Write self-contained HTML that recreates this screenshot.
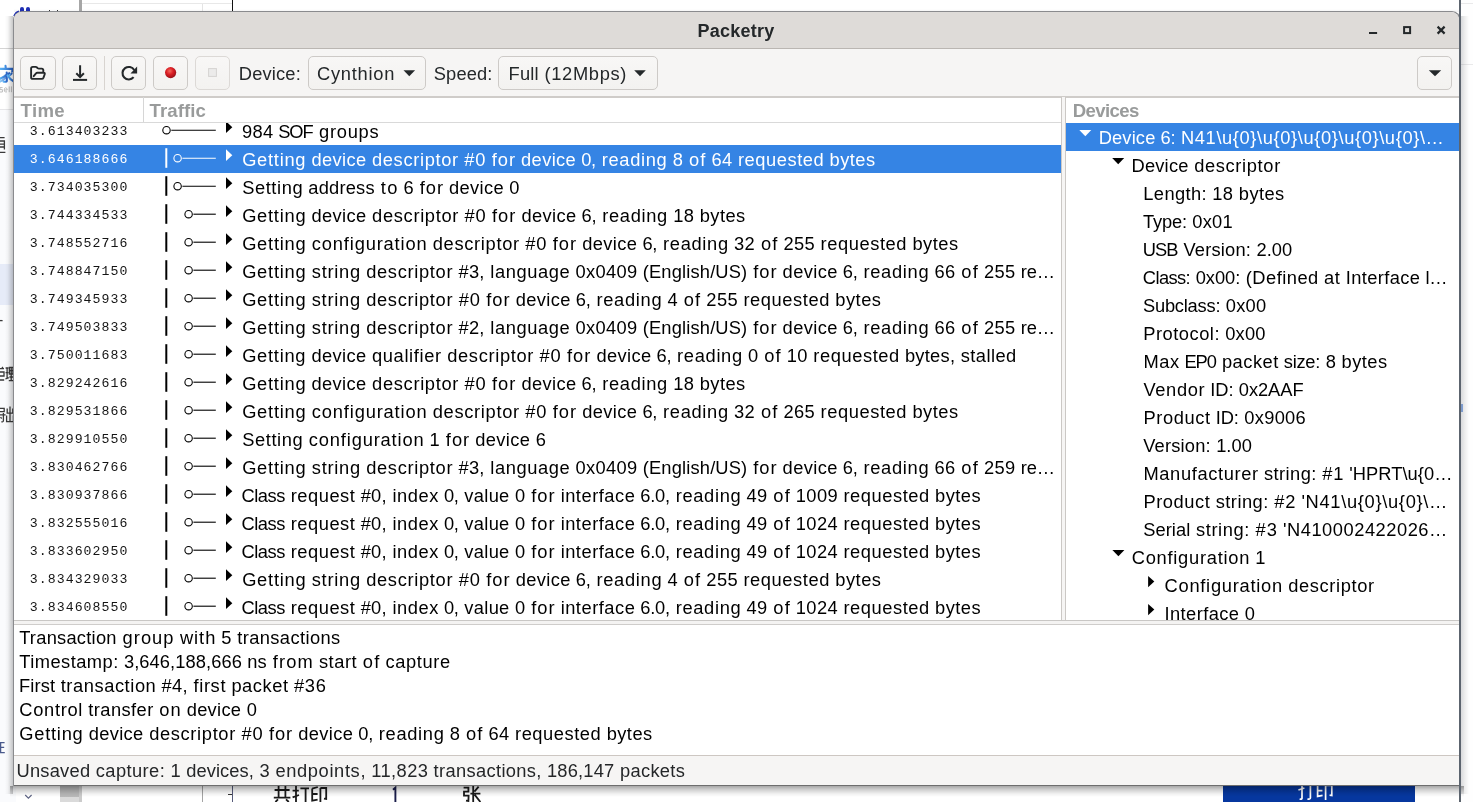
<!DOCTYPE html>
<html><head><meta charset="utf-8"><title>Packetry</title>
<style>
html,body{margin:0;padding:0;}
body{width:1473px;height:802px;overflow:hidden;background:#fff;position:relative;font-family:"Liberation Sans",sans-serif;}
.abs{position:absolute;}
.l{position:absolute;font-size:18.3px;white-space:pre;}
.l i{position:absolute;top:0;font-style:normal;}
.btn{position:absolute;top:56px;height:32px;border:1px solid #cdc7c2;border-radius:5px;background:linear-gradient(#f7f6f5,#f1efed);box-sizing:content-box;}
</style></head><body><div id='root' style='position:absolute;left:0;top:0;width:1473px;height:802px;overflow:hidden;will-change:transform'>

<!-- background -->
<div class='abs' style='left:0;top:109.5px;width:16px;height:693px;background:#fafbfd'></div>
<div class='abs' style='left:0;top:263.5px;width:16px;height:41.5px;background:#e6ebf8'></div>
<div class='abs' style='left:0;top:47.5px;width:16px;height:1px;background:#d4d4d4'></div>
<div class='abs' style='left:0;top:109px;width:16px;height:1px;background:#e6e6e8'></div>
<div class='abs' style='left:79.3px;top:0;width:2.7px;height:14px;background:#a6a6a6'></div>
<div class='abs' style='left:82px;top:3.2px;width:150px;height:1px;background:#e8e8e8'></div>
<div class='abs' style='left:201.5px;top:4px;width:1px;height:10px;background:#e4e4e4'></div>
<div class='abs' style='left:231.6px;top:0;width:1.4px;height:14px;background:#111'></div>
<div class='abs' style='left:65px;top:10.6px;width:14.5px;height:1.6px;background:#1c1c1c'></div>
<div class='abs' style='left:48.5px;top:9.5px;width:1.2px;height:3px;background:#333'></div>
<div class='abs' style='left:57px;top:9.5px;width:1.2px;height:3px;background:#333'></div>
<div class='abs' style='left:19.8px;top:7px;width:4.6px;height:7px;border-radius:2.3px 2.3px 0 0;background:#1f2fb4'></div>
<div class='abs' style='left:25.6px;top:7px;width:4.6px;height:7px;border-radius:2.3px 2.3px 0 0;background:#1f2fb4'></div>
<svg class='abs' style='left:12px;top:9px' width='10' height='10' viewBox='0 0 10 10'><path d='M2 7 Q3.5 3.2 7 2.2' stroke='#1f2fb4' stroke-width='1.6' fill='none'/></svg>
<svg class='abs' style='left:0;top:60px' width='16' height='40' viewBox='0 60 16 40'>
<defs><linearGradient id='jg' x1='0' x2='1' y1='0' y2='0'><stop offset='0' stop-color='#5ab4f6'/><stop offset='1' stop-color='#2a62c4'/></linearGradient></defs>
<g stroke='url(#jg)' stroke-width='2.1' fill='none' stroke-linecap='round'>
<path d='M5.4 65.8 L5.6 68'/><path d='M0 68.9 L12.6 68.9 L12.2 71.4'/><path d='M0 72.5 L9.6 72.5'/>
<path d='M9.2 73.2 Q5 77 0 78.6'/><path d='M6.7 72.6 L6.8 81 Q6.6 82.2 3.6 81.6'/><path d='M5.8 75 Q3 77.6 0 78.8' opacity='.7'/>
<path d='M5.8 77.6 Q3 80.4 0 81.6' opacity='.7'/><path d='M7.6 75.4 Q10 79.4 13.2 81.2'/><path d='M11.6 73.4 L9.6 75.4'/>
</g>
<g stroke='#bdbdbd' stroke-width='1' fill='none'>
<path d='M2.6 87.6 L0 87.6 L0 89.6 L2.4 89.6 L2.4 92 L0 92'/><path d='M4.2 90 L7.2 90 Q7.2 87.8 5.6 87.8 Q4.2 87.8 4.2 90 Q4.2 92 5.8 92 L7 91.8'/><path d='M9.2 86.4 L9.2 92.2'/><path d='M11.4 86.4 L11.4 92.2'/>
</g></svg>
<svg class='abs' style='left:0;top:130px' width='16' height='300' viewBox='0 130 16 300'>
<g stroke='#3a3a3a' stroke-width='1.3' fill='none'>
<path d='M0 137.6 L4.6 137.6 M0 141 L4.4 141 L4.4 149.4 M0 144.2 L4.4 144.2 M0 147 L4.4 147 M0 152.4 L5.4 152.4'/>
<path d='M0 320.6 L2.6 320.6'/>
<path d='M0 368.6 L4 368.6 M0 372 L4 372 L4 376 L0 376 M0 380 L4.2 380 M2 367 L3 368.4'/>
<path d='M5.6 368 L8.6 368 M5.6 372.6 L8.6 372.6 M5.4 379 L8.8 377.6 M7.1 368 L7.1 378.4'/>
<path d='M9.4 367.4 L13 367.4 L13 374 L9.4 374 Z M9.4 370.7 L13 370.7 M11.2 367.4 L11.2 380.4 M9.4 377 L13 377 M8.8 380.6 L13.4 380.6'/>
<path d='M0 408.4 L4.2 408.4 L4.2 411.6 L0 411.6 M0 414.8 L5.6 414.8 M3.4 413 L3.4 421 Q3.2 422.2 1.4 421.6 M0.6 417 L1.6 418.6'/>
<path d='M10 406.4 L10 421.6 M7.2 408.4 L7.2 413.2 L12.8 413.2 L12.8 408.4 M6.6 415.4 L6.6 421.6 L13.4 421.6 L13.4 415.4'/>
</g>
<g stroke='#4a5a8c' stroke-width='1.3' fill='none'><path d='M4.6 742.6 L0.6 742.6 L0.6 752.6 L4.8 752.6 M0.6 747.4 L4.2 747.4'/></g>
</svg>
<svg class='abs' style='left:0;top:736px' width='16' height='24' viewBox='0 736 16 24'><g stroke='#4a5a8c' stroke-width='1.3' fill='none'><path d='M4.6 742.6 L0.6 742.6 L0.6 752.6 L4.8 752.6 M0.6 747.4 L4.2 747.4'/></g></svg>
<div class='abs' style='left:1461px;top:0;width:12px;height:802px;background:#fefefe'></div>
<div class='abs' style='left:1461px;top:3px;width:12px;height:1px;background:#e9e9ea'></div>
<div class='abs' style='left:1461px;top:63.5px;width:12px;height:1px;background:#e9e9ea'></div>
<div class='abs' style='left:1461.4px;top:404px;width:1.6px;height:8px;background:#8fb0e6'></div>
<div class='abs' style='left:60.3px;top:780px;width:18.7px;height:16.7px;background:#b9b9b9'></div>
<div class='abs' style='left:60.3px;top:796.7px;width:18.7px;height:6px;background:#dadada'></div>
<div class='abs' style='left:79px;top:780px;width:2.8px;height:22px;background:#cbcbcb'></div>
<div class='abs' style='left:201.8px;top:780px;width:1.2px;height:22px;background:#a4a4a4'></div>
<div class='abs' style='left:232px;top:780px;width:1.2px;height:22px;background:#565b7a'></div>
<div class='abs' style='left:228px;top:794px;width:4px;height:1.4px;background:#333'></div>
<svg class='abs' style='left:24px;top:793px' width='10' height='8' viewBox='0 0 10 8'><path d='M1.2 2 L4.4 5.2 L7.6 2' stroke='#5a6080' stroke-width='1.1' fill='none'/></svg>
<svg class='abs' style='left:268px;top:780px' width='220' height='22' viewBox='268 780 220 22'>
<g stroke='#1a1a1a' stroke-width='1.8' fill='none'>
<path d='M278.6 786 L278.6 797.6 M285.4 786 L285.4 797.6 M274.6 790 L289.6 790 M273.8 797.6 L290.4 797.6 M278 799.4 L275.4 802 M286 799.4 L288.8 802'/>
<path d='M292.6 790.6 L298.8 790.6 M296 786 L296 802 M292.6 797.4 L299 795 M300.4 788.4 L309 788.4 M305.6 788.4 L305.6 802'/>
<path d='M312.2 788.6 L312.2 800.6 L317.6 799.6 M312.2 788.6 L317.8 787 M312.2 794 L317.6 794 M320.4 788 L326.2 788 L326.2 799 L324 798.6 M320.4 788 L320.4 802'/>
<path d='M463.6 787.6 L468.4 787.6 L468.4 791.6 L464 791.6 L464 795.6 L468.6 795.6 L468.4 801 L466 800.6'/>
<path d='M473.2 786 L473.2 802 M470.4 793.6 L480.4 793.6 M478.6 786.6 L474.4 791.6 M474.6 794.6 L480.4 802'/>
</g>
<path d='M393 789.8 L395.4 787.6 L395.4 802' stroke='#1a1d4a' stroke-width='1.9' fill='none'/>
</svg>
<div class='abs' style='left:1222.6px;top:780px;width:192px;height:22px;background:#06379f'></div>
<svg class='abs' style='left:1290px;top:780px' width='60' height='22' viewBox='1290 780 60 22'>
<g stroke='#fff' stroke-width='1.7' fill='none'>
<path d='M1298.4 790 L1304.4 788 M1302 785 L1302 798.4 Q1301.8 799.6 1299.6 799 M1305.6 785 L1312.6 785 M1310.4 785 L1310.4 798 Q1310.2 799.6 1307.4 799'/>
<path d='M1317.6 785 L1317.6 796.4 L1322.6 795.4 M1317.6 790.6 L1322.4 790.6 M1325.6 785 L1325.6 800 M1325.6 785.4 L1331.8 785.4 L1331.8 795.6 L1329.6 795.2'/>
</g></svg>
<!-- window -->
<div class='abs' style='left:4.5px;top:16px;width:8.4px;height:778px;background:linear-gradient(to right,rgba(0,0,0,0) 0%,rgba(0,0,0,0.035) 35%,rgba(0,0,0,0.215) 100%)'></div>
<div class='abs' style='left:1461px;top:16px;width:7.5px;height:778px;background:linear-gradient(to right,rgba(20,25,40,0.16) 0%,rgba(0,0,0,0.07) 45%,rgba(0,0,0,0) 100%)'></div>
<div class='abs' style='left:10px;top:785.8px;width:1454px;height:11.4px;background:linear-gradient(to bottom,rgba(0,0,0,0.34) 0%,rgba(0,0,0,0.2) 30%,rgba(0,0,0,0.06) 70%,rgba(0,0,0,0) 100%)'></div>
<div class='abs' style='left:14px;top:9px;width:1445px;height:3px;background:linear-gradient(to bottom,rgba(0,0,0,0),rgba(0,0,0,0.05))'></div>
<div class='abs' style='left:12.9px;top:11.2px;width:1448.2px;height:774.7px;border-radius:9px 9px 0 0;background:#8a8b8e'></div>
<div class='abs' style='left:1458.9px;top:0;width:2.2px;height:802px;background:#5c646e'></div>
<div class='abs' style='left:14px;top:784.6px;width:1445px;height:1.3px;background:#6e6e6e'></div>
<div class='abs' id='win' style='left:14.1px;top:12px;width:1444.8px;height:772.7px;border-radius:8px 8px 0 0;overflow:hidden;background:#fff'>
<div class='abs' style='left:0;top:0;width:1446px;height:36.3px;background:#dedbd8'></div>
<div class='abs' style='left:0;top:36px;width:1446px;height:1.4px;background:#bab6b2'></div>
<div class='abs' style='left:0;top:37.3px;width:1446px;height:47.2px;background:#f6f5f4'></div>
<div class='abs' style='left:0;top:84.2px;width:1446px;height:1.4px;background:#cfccc9'></div>
</div>
<div style='position:absolute;left:697.6px;top:12.7px;height:37px;line-height:37px;font-family:"Liberation Sans", sans-serif;font-size:18px;font-weight:bold;letter-spacing:0.220px;color:#24282a;white-space:pre;'>Packetry</div>
<svg class='abs' style='left:1360px;top:20px' width='95' height='22' viewBox='0 0 95 22'>
<rect x='9' y='12' width='8.1' height='2' fill='#24282a'/>
<rect x='44.1' y='7.1' width='6' height='6' fill='none' stroke='#24282a' stroke-width='2'/>
<path d='M77.6 6.6 L84.6 13.6 M84.6 6.6 L77.6 13.6' stroke='#24282a' stroke-width='2.2' fill='none'/>
</svg>
<div class='abs' style='left:20.4px;top:56.4px;width:33.3px;height:31.2px;border:1px solid #cdcac7;border-radius:5px;background:linear-gradient(#f8f7f6,#f3f2f0)'></div>
<div class='abs' style='left:62.2px;top:56.4px;width:33.3px;height:31.2px;border:1px solid #cdcac7;border-radius:5px;background:linear-gradient(#f8f7f6,#f3f2f0)'></div>
<div class='abs' style='left:111.4px;top:56.4px;width:33.1px;height:31.2px;border:1px solid #cdcac7;border-radius:5px;background:linear-gradient(#f8f7f6,#f3f2f0)'></div>
<div class='abs' style='left:153.2px;top:56.4px;width:33.3px;height:31.2px;border:1px solid #cdcac7;border-radius:5px;background:linear-gradient(#f8f7f6,#f3f2f0)'></div>
<div class='abs' style='left:195.3px;top:56.4px;width:33.2px;height:31.2px;border:1px solid #dcd9d6;border-radius:5px;background:linear-gradient(#f8f7f6,#f3f2f0)'></div>
<div class='abs' style='left:103.9px;top:56.4px;width:1.0px;height:33.2px;background:#d8d4d0;'></div>
<svg class='abs' style='left:20px;top:56px' width='215' height='34' viewBox='20 56 215 34'>
<g fill='none' stroke='#24282a' stroke-width='1.9' stroke-linejoin='round' stroke-linecap='round'>
<path d='M33.7 76.2 L36 73.4 Q36.5 72.7 37.4 72.7 L43.6 72.7 Q45.2 72.7 44.7 74.2 L43.5 77.6 Q43 78.9 41.6 78.9 L32.8 78.9 Q31.1 78.9 31.1 77.2 L31.1 68.6 Q31.1 66.9 32.8 66.9 L35.6 66.9 Q36.4 66.9 37 67.5 L37.6 68.1 Q38.1 68.6 39 68.6 L41.7 68.6 Q43.3 68.6 43.3 70.2 L43.3 71.6'/>
</g>
<g fill='none' stroke='#24282a' stroke-width='2'>
<path d='M80.1 65.2 L80.1 76.6 M76.3 73.3 L80.1 77.1 L83.9 73.3' stroke-linecap='butt'/>
<path d='M73 79.9 L87.1 79.9'/>
</g>
<path d='M133.6 77.2 A6.25 6.25 0 1 1 134.2 70.1' fill='none' stroke='#24282a' stroke-width='2.1'/>
<path d='M137.1 66.6 L137.1 73.4 L130.5 73.4 Z' fill='#24282a'/>
<defs><radialGradient id='rg' cx='42%' cy='36%' r='62%'><stop offset='0' stop-color='#f06a5c'/><stop offset='0.5' stop-color='#dc1f25'/><stop offset='1' stop-color='#9c1219'/></radialGradient></defs>
<circle cx='170.6' cy='72.6' r='5.6' fill='url(#rg)'/>
<rect x='208.6' y='68.6' width='7.8' height='7.8' fill='#ecebea' stroke='#d5d3d1' stroke-width='1'/>
</svg>
<div class='l' style='left:238.70px;top:57px;height:34px;line-height:34px;color:#24282a'><i style='left:0.08px;letter-spacing:0.169px'>Device:</i></div>
<div class='abs' style='left:307.7px;top:56.4px;width:116.8px;height:31.2px;border:1px solid #cdcac7;border-radius:5px;background:linear-gradient(#f8f7f6,#f3f2f0)'></div>
<div class='l' style='left:316.57px;top:57px;height:34px;line-height:34px;color:#24282a'><i style='left:0.38px;letter-spacing:0.769px'>Cynthion</i></div>
<svg class='abs' style='left:403px;top:70px' width='15' height='9' viewBox='0 0 15 9'><path d='M0.50 0.20 L12.10 0.20 L6.30 6.20 Z' fill='#24282a'/></svg>
<div class='l' style='left:433.77px;top:57px;height:34px;line-height:34px;color:#24282a'><i style='left:0.06px;letter-spacing:0.115px'>Speed:</i></div>
<div class='abs' style='left:498.4px;top:56.4px;width:157.6px;height:31.2px;border:1px solid #cdcac7;border-radius:5px;background:linear-gradient(#f8f7f6,#f3f2f0)'></div>
<div class='l' style='left:508.40px;top:57px;height:34px;line-height:34px;color:#24282a'><i style='left:0.11px;letter-spacing:0.227px'>Full</i><i style='left:36.12px;letter-spacing:0.666px'>(12Mbps)</i></div>
<svg class='abs' style='left:634px;top:70px' width='15' height='9' viewBox='0 0 15 9'><path d='M0.20 0.20 L11.80 0.20 L6.00 6.20 Z' fill='#24282a'/></svg>
<div class='abs' style='left:1417.3px;top:56.4px;width:33.2px;height:31.2px;border:1px solid #cdcac7;border-radius:5px;background:linear-gradient(#f8f7f6,#f3f2f0)'></div>
<svg class='abs' style='left:1428px;top:70px' width='15' height='9' viewBox='0 0 15 9'><path d='M0.80 0.20 L13.20 0.20 L7.00 6.20 Z' fill='#24282a'/></svg>
<!-- traffic -->
<div style='position:absolute;left:20.6px;top:98.2px;height:25px;line-height:25px;font-family:"Liberation Sans", sans-serif;font-size:18.6px;font-weight:bold;letter-spacing:0.312px;color:#999b9b;white-space:pre;'>Time</div>
<div style='position:absolute;left:149.6px;top:98.2px;height:25px;line-height:25px;font-family:"Liberation Sans", sans-serif;font-size:18.6px;font-weight:bold;letter-spacing:0.065px;color:#999b9b;white-space:pre;'>Traffic</div>
<div class='abs' style='left:143.0px;top:97.4px;width:1.0px;height:24.6px;background:#d6d6d6;'></div>
<div class='abs' style='left:14.0px;top:122.0px;width:1048.0px;height:1.0px;background:#d9d9d9;'></div>
<div class='abs' style='left:1061.0px;top:97.0px;width:1.0px;height:523.5px;background:#cbc8c5;'></div>
<div class='abs' style='left:1065.0px;top:97.0px;width:1.0px;height:523.5px;background:#cbc8c5;'></div>
<div class='abs' style='left:1062.0px;top:97.0px;width:3.0px;height:523.5px;background:#f6f5f4;'></div>
<div class='abs' style='left:14px;top:123px;width:1047px;height:497px;overflow:hidden'>
<div class='abs' style='left:0;top:-6px;width:1048px;height:28px;'>
<div class='abs' style='left:15.8px;top:0.9px;height:28px;line-height:28px;font-family:"Liberation Mono", monospace;font-size:13.2px;letter-spacing:1.054px;color:#151515;white-space:pre'>3.613403233</div>
<svg class='abs' style='left:136px;top:0' width='90' height='28' viewBox='150 0 90 28'><circle cx='166.5' cy='13.2' r='3.7' fill='none' stroke='#000' stroke-width='1.1'/><line x1='171.3' y1='13.2' x2='215.8' y2='13.2' stroke='#000' stroke-width='1.1'/><path d='M226 4.3 L232.3 10.2 L226 16.1 Z' fill='#000'/></svg>
<div class='l' style='left:227.84px;top:0.5px;height:28px;line-height:28px;color:#000'><i style='left:0.17px;letter-spacing:0.340px'>984</i><i style='left:36.37px;letter-spacing:-1.010px'>SOF</i><i style='left:77.16px;letter-spacing:0.753px'>groups</i></div>
</div>
<div class='abs' style='left:0;top:22px;width:1048px;height:28px;background:#3584e4;'>
<div class='abs' style='left:15.8px;top:0.9px;height:28px;line-height:28px;font-family:"Liberation Mono", monospace;font-size:13.2px;letter-spacing:1.054px;color:#fff;white-space:pre'>3.646188666</div>
<svg class='abs' style='left:136px;top:0' width='90' height='28' viewBox='150 0 90 28'><line x1='166.3' y1='3.2' x2='166.3' y2='22.8' stroke='#fff' stroke-width='2'/><circle cx='177.6' cy='13.2' r='3.7' fill='none' stroke='#fff' stroke-width='1.1'/><line x1='182.4' y1='13.2' x2='215.8' y2='13.2' stroke='#fff' stroke-width='1.1'/><path d='M226 4.3 L232.3 10.2 L226 16.1 Z' fill='#fff'/></svg>
<div class='l' style='left:227.78px;top:0.5px;height:28px;line-height:28px;color:#fff'><i style='left:0.37px;letter-spacing:0.739px'>Getting</i><i style='left:69.66px;letter-spacing:0.361px'>device</i><i style='left:130.18px;letter-spacing:0.657px'>descriptor</i><i style='left:222.49px;letter-spacing:0.864px'>#0</i><i style='left:249.97px;letter-spacing:0.996px'>for</i><i style='left:279.34px;letter-spacing:0.361px'>device</i><i style='left:339.41px;letter-spacing:-0.243px'>0,</i><i style='left:359.99px;letter-spacing:0.671px'>reading</i><i style='left:430.88px;letter-spacing:0.358px'>8</i><i style='left:447.15px;letter-spacing:1.145px'>of</i><i style='left:469.65px;letter-spacing:0.358px'>64</i><i style='left:496.16px;letter-spacing:0.562px'>requested</i><i style='left:587.83px;letter-spacing:0.464px'>bytes</i></div>
</div>
<div class='abs' style='left:0;top:50px;width:1048px;height:28px;'>
<div class='abs' style='left:15.8px;top:0.9px;height:28px;line-height:28px;font-family:"Liberation Mono", monospace;font-size:13.2px;letter-spacing:1.054px;color:#151515;white-space:pre'>3.734035300</div>
<svg class='abs' style='left:136px;top:0' width='90' height='28' viewBox='150 0 90 28'><line x1='166.3' y1='3.2' x2='166.3' y2='22.8' stroke='#000' stroke-width='2'/><circle cx='177.6' cy='13.2' r='3.7' fill='none' stroke='#000' stroke-width='1.1'/><line x1='182.4' y1='13.2' x2='215.8' y2='13.2' stroke='#000' stroke-width='1.1'/><path d='M226 4.3 L232.3 10.2 L226 16.1 Z' fill='#000'/></svg>
<div class='l' style='left:227.87px;top:0.5px;height:28px;line-height:28px;color:#000'><i style='left:0.29px;letter-spacing:0.586px'>Setting</i><i style='left:66.46px;letter-spacing:0.195px'>address</i><i style='left:138.82px;letter-spacing:1.388px'>to</i><i style='left:161.67px;letter-spacing:0.346px'>6</i><i style='left:177.85px;letter-spacing:0.987px'>for</i><i style='left:207.18px;letter-spacing:0.350px'>device</i><i style='left:267.49px;letter-spacing:0.346px'>0</i></div>
</div>
<div class='abs' style='left:0;top:78px;width:1048px;height:28px;'>
<div class='abs' style='left:15.8px;top:0.9px;height:28px;line-height:28px;font-family:"Liberation Mono", monospace;font-size:13.2px;letter-spacing:1.054px;color:#151515;white-space:pre'>3.744334533</div>
<svg class='abs' style='left:136px;top:0' width='90' height='28' viewBox='150 0 90 28'><line x1='166.3' y1='3.2' x2='166.3' y2='22.8' stroke='#000' stroke-width='2'/><circle cx='188.6' cy='13.2' r='3.7' fill='none' stroke='#000' stroke-width='1.1'/><line x1='193.4' y1='13.2' x2='215.8' y2='13.2' stroke='#000' stroke-width='1.1'/><path d='M226 4.3 L232.3 10.2 L226 16.1 Z' fill='#000'/></svg>
<div class='l' style='left:227.78px;top:0.5px;height:28px;line-height:28px;color:#000'><i style='left:0.37px;letter-spacing:0.749px'>Getting</i><i style='left:69.74px;letter-spacing:0.372px'>device</i><i style='left:130.34px;letter-spacing:0.667px'>descriptor</i><i style='left:222.75px;letter-spacing:0.877px'>#0</i><i style='left:250.27px;letter-spacing:1.005px'>for</i><i style='left:279.67px;letter-spacing:0.372px'>device</i><i style='left:339.82px;letter-spacing:-0.234px'>6,</i><i style='left:360.41px;letter-spacing:0.682px'>reading</i><i style='left:431.39px;letter-spacing:0.370px'>18</i><i style='left:457.88px;letter-spacing:0.474px'>bytes</i></div>
</div>
<div class='abs' style='left:0;top:106px;width:1048px;height:28px;'>
<div class='abs' style='left:15.8px;top:0.9px;height:28px;line-height:28px;font-family:"Liberation Mono", monospace;font-size:13.2px;letter-spacing:1.054px;color:#151515;white-space:pre'>3.748552716</div>
<svg class='abs' style='left:136px;top:0' width='90' height='28' viewBox='150 0 90 28'><line x1='166.3' y1='3.2' x2='166.3' y2='22.8' stroke='#000' stroke-width='2'/><circle cx='188.6' cy='13.2' r='3.7' fill='none' stroke='#000' stroke-width='1.1'/><line x1='193.4' y1='13.2' x2='215.8' y2='13.2' stroke='#000' stroke-width='1.1'/><path d='M226 4.3 L232.3 10.2 L226 16.1 Z' fill='#000'/></svg>
<div class='l' style='left:227.78px;top:0.5px;height:28px;line-height:28px;color:#000'><i style='left:0.38px;letter-spacing:0.757px'>Getting</i><i style='left:70.04px;letter-spacing:0.845px'>configuration</i><i style='left:190.99px;letter-spacing:0.674px'>descriptor</i><i style='left:283.48px;letter-spacing:0.885px'>#0</i><i style='left:311.02px;letter-spacing:1.012px'>for</i><i style='left:340.44px;letter-spacing:0.379px'>device</i><i style='left:400.64px;letter-spacing:-0.228px'>6,</i><i style='left:421.25px;letter-spacing:0.690px'>reading</i><i style='left:492.28px;letter-spacing:0.379px'>32</i><i style='left:519.14px;letter-spacing:1.163px'>of</i><i style='left:541.68px;letter-spacing:0.379px'>255</i><i style='left:578.80px;letter-spacing:0.581px'>requested</i><i style='left:670.65px;letter-spacing:0.482px'>bytes</i></div>
</div>
<div class='abs' style='left:0;top:134px;width:1048px;height:28px;'>
<div class='abs' style='left:15.8px;top:0.9px;height:28px;line-height:28px;font-family:"Liberation Mono", monospace;font-size:13.2px;letter-spacing:1.054px;color:#151515;white-space:pre'>3.748847150</div>
<svg class='abs' style='left:136px;top:0' width='90' height='28' viewBox='150 0 90 28'><line x1='166.3' y1='3.2' x2='166.3' y2='22.8' stroke='#000' stroke-width='2'/><circle cx='188.6' cy='13.2' r='3.7' fill='none' stroke='#000' stroke-width='1.1'/><line x1='193.4' y1='13.2' x2='215.8' y2='13.2' stroke='#000' stroke-width='1.1'/><path d='M226 4.3 L232.3 10.2 L226 16.1 Z' fill='#000'/></svg>
<div class='l' style='left:227.78px;top:0.5px;height:28px;line-height:28px;color:#000'><i style='left:0.38px;letter-spacing:0.760px'>Getting</i><i style='left:70.00px;letter-spacing:0.727px'>string</i><i style='left:124.41px;letter-spacing:0.677px'>descriptor</i><i style='left:216.65px;letter-spacing:0.315px'>#3,</i><i style='left:248.52px;letter-spacing:0.606px'>language</i><i style='left:333.82px;letter-spacing:0.311px'>0x0409</i><i style='left:400.96px;letter-spacing:0.170px'>(English/US)</i><i style='left:511.40px;letter-spacing:1.014px'>for</i><i style='left:540.83px;letter-spacing:0.382px'>device</i><i style='left:601.04px;letter-spacing:-0.226px'>6,</i><i style='left:621.66px;letter-spacing:0.693px'>reading</i><i style='left:692.72px;letter-spacing:0.382px'>66</i><i style='left:719.58px;letter-spacing:1.165px'>of</i><i style='left:742.13px;letter-spacing:0.382px'>255</i><i style='left:778.92px;letter-spacing:-0.098px'>re…</i></div>
</div>
<div class='abs' style='left:0;top:162px;width:1048px;height:28px;'>
<div class='abs' style='left:15.8px;top:0.9px;height:28px;line-height:28px;font-family:"Liberation Mono", monospace;font-size:13.2px;letter-spacing:1.054px;color:#151515;white-space:pre'>3.749345933</div>
<svg class='abs' style='left:136px;top:0' width='90' height='28' viewBox='150 0 90 28'><line x1='166.3' y1='3.2' x2='166.3' y2='22.8' stroke='#000' stroke-width='2'/><circle cx='188.6' cy='13.2' r='3.7' fill='none' stroke='#000' stroke-width='1.1'/><line x1='193.4' y1='13.2' x2='215.8' y2='13.2' stroke='#000' stroke-width='1.1'/><path d='M226 4.3 L232.3 10.2 L226 16.1 Z' fill='#000'/></svg>
<div class='l' style='left:227.78px;top:0.5px;height:28px;line-height:28px;color:#000'><i style='left:0.38px;letter-spacing:0.758px'>Getting</i><i style='left:69.98px;letter-spacing:0.725px'>string</i><i style='left:124.39px;letter-spacing:0.675px'>descriptor</i><i style='left:216.89px;letter-spacing:0.887px'>#0</i><i style='left:244.43px;letter-spacing:1.013px'>for</i><i style='left:273.86px;letter-spacing:0.380px'>device</i><i style='left:334.06px;letter-spacing:-0.227px'>6,</i><i style='left:354.67px;letter-spacing:0.691px'>reading</i><i style='left:425.72px;letter-spacing:0.380px'>4</i><i style='left:442.02px;letter-spacing:1.163px'>of</i><i style='left:464.57px;letter-spacing:0.380px'>255</i><i style='left:501.69px;letter-spacing:0.582px'>requested</i><i style='left:593.55px;letter-spacing:0.483px'>bytes</i></div>
</div>
<div class='abs' style='left:0;top:190px;width:1048px;height:28px;'>
<div class='abs' style='left:15.8px;top:0.9px;height:28px;line-height:28px;font-family:"Liberation Mono", monospace;font-size:13.2px;letter-spacing:1.054px;color:#151515;white-space:pre'>3.749503833</div>
<svg class='abs' style='left:136px;top:0' width='90' height='28' viewBox='150 0 90 28'><line x1='166.3' y1='3.2' x2='166.3' y2='22.8' stroke='#000' stroke-width='2'/><circle cx='188.6' cy='13.2' r='3.7' fill='none' stroke='#000' stroke-width='1.1'/><line x1='193.4' y1='13.2' x2='215.8' y2='13.2' stroke='#000' stroke-width='1.1'/><path d='M226 4.3 L232.3 10.2 L226 16.1 Z' fill='#000'/></svg>
<div class='l' style='left:227.78px;top:0.5px;height:28px;line-height:28px;color:#000'><i style='left:0.38px;letter-spacing:0.760px'>Getting</i><i style='left:70.00px;letter-spacing:0.727px'>string</i><i style='left:124.41px;letter-spacing:0.677px'>descriptor</i><i style='left:216.65px;letter-spacing:0.315px'>#2,</i><i style='left:248.52px;letter-spacing:0.606px'>language</i><i style='left:333.82px;letter-spacing:0.311px'>0x0409</i><i style='left:400.96px;letter-spacing:0.170px'>(English/US)</i><i style='left:511.40px;letter-spacing:1.014px'>for</i><i style='left:540.83px;letter-spacing:0.382px'>device</i><i style='left:601.04px;letter-spacing:-0.226px'>6,</i><i style='left:621.66px;letter-spacing:0.693px'>reading</i><i style='left:692.72px;letter-spacing:0.382px'>66</i><i style='left:719.58px;letter-spacing:1.165px'>of</i><i style='left:742.13px;letter-spacing:0.382px'>255</i><i style='left:778.92px;letter-spacing:-0.098px'>re…</i></div>
</div>
<div class='abs' style='left:0;top:218px;width:1048px;height:28px;'>
<div class='abs' style='left:15.8px;top:0.9px;height:28px;line-height:28px;font-family:"Liberation Mono", monospace;font-size:13.2px;letter-spacing:1.054px;color:#151515;white-space:pre'>3.750011683</div>
<svg class='abs' style='left:136px;top:0' width='90' height='28' viewBox='150 0 90 28'><line x1='166.3' y1='3.2' x2='166.3' y2='22.8' stroke='#000' stroke-width='2'/><circle cx='188.6' cy='13.2' r='3.7' fill='none' stroke='#000' stroke-width='1.1'/><line x1='193.4' y1='13.2' x2='215.8' y2='13.2' stroke='#000' stroke-width='1.1'/><path d='M226 4.3 L232.3 10.2 L226 16.1 Z' fill='#000'/></svg>
<div class='l' style='left:227.78px;top:0.5px;height:28px;line-height:28px;color:#000'><i style='left:0.37px;letter-spacing:0.743px'>Getting</i><i style='left:69.69px;letter-spacing:0.365px'>device</i><i style='left:130.23px;letter-spacing:0.643px'>qualifier</i><i style='left:205.42px;letter-spacing:0.661px'>descriptor</i><i style='left:297.77px;letter-spacing:0.869px'>#0</i><i style='left:325.27px;letter-spacing:1.000px'>for</i><i style='left:354.65px;letter-spacing:0.365px'>device</i><i style='left:414.75px;letter-spacing:-0.239px'>6,</i><i style='left:435.33px;letter-spacing:0.676px'>reading</i><i style='left:506.26px;letter-spacing:0.363px'>0</i><i style='left:522.54px;letter-spacing:1.149px'>of</i><i style='left:545.05px;letter-spacing:0.363px'>10</i><i style='left:571.58px;letter-spacing:0.566px'>requested</i><i style='left:663.18px;letter-spacing:0.250px'>bytes,</i><i style='left:718.91px;letter-spacing:0.453px'>stalled</i></div>
</div>
<div class='abs' style='left:0;top:246px;width:1048px;height:28px;'>
<div class='abs' style='left:15.8px;top:0.9px;height:28px;line-height:28px;font-family:"Liberation Mono", monospace;font-size:13.2px;letter-spacing:1.054px;color:#151515;white-space:pre'>3.829242616</div>
<svg class='abs' style='left:136px;top:0' width='90' height='28' viewBox='150 0 90 28'><line x1='166.3' y1='3.2' x2='166.3' y2='22.8' stroke='#000' stroke-width='2'/><circle cx='188.6' cy='13.2' r='3.7' fill='none' stroke='#000' stroke-width='1.1'/><line x1='193.4' y1='13.2' x2='215.8' y2='13.2' stroke='#000' stroke-width='1.1'/><path d='M226 4.3 L232.3 10.2 L226 16.1 Z' fill='#000'/></svg>
<div class='l' style='left:227.78px;top:0.5px;height:28px;line-height:28px;color:#000'><i style='left:0.37px;letter-spacing:0.749px'>Getting</i><i style='left:69.74px;letter-spacing:0.372px'>device</i><i style='left:130.34px;letter-spacing:0.667px'>descriptor</i><i style='left:222.75px;letter-spacing:0.877px'>#0</i><i style='left:250.27px;letter-spacing:1.005px'>for</i><i style='left:279.67px;letter-spacing:0.372px'>device</i><i style='left:339.82px;letter-spacing:-0.234px'>6,</i><i style='left:360.41px;letter-spacing:0.682px'>reading</i><i style='left:431.39px;letter-spacing:0.370px'>18</i><i style='left:457.88px;letter-spacing:0.474px'>bytes</i></div>
</div>
<div class='abs' style='left:0;top:274px;width:1048px;height:28px;'>
<div class='abs' style='left:15.8px;top:0.9px;height:28px;line-height:28px;font-family:"Liberation Mono", monospace;font-size:13.2px;letter-spacing:1.054px;color:#151515;white-space:pre'>3.829531866</div>
<svg class='abs' style='left:136px;top:0' width='90' height='28' viewBox='150 0 90 28'><line x1='166.3' y1='3.2' x2='166.3' y2='22.8' stroke='#000' stroke-width='2'/><circle cx='188.6' cy='13.2' r='3.7' fill='none' stroke='#000' stroke-width='1.1'/><line x1='193.4' y1='13.2' x2='215.8' y2='13.2' stroke='#000' stroke-width='1.1'/><path d='M226 4.3 L232.3 10.2 L226 16.1 Z' fill='#000'/></svg>
<div class='l' style='left:227.78px;top:0.5px;height:28px;line-height:28px;color:#000'><i style='left:0.38px;letter-spacing:0.757px'>Getting</i><i style='left:70.04px;letter-spacing:0.845px'>configuration</i><i style='left:190.99px;letter-spacing:0.674px'>descriptor</i><i style='left:283.48px;letter-spacing:0.885px'>#0</i><i style='left:311.02px;letter-spacing:1.012px'>for</i><i style='left:340.44px;letter-spacing:0.379px'>device</i><i style='left:400.64px;letter-spacing:-0.228px'>6,</i><i style='left:421.25px;letter-spacing:0.690px'>reading</i><i style='left:492.28px;letter-spacing:0.379px'>32</i><i style='left:519.14px;letter-spacing:1.163px'>of</i><i style='left:541.68px;letter-spacing:0.379px'>265</i><i style='left:578.80px;letter-spacing:0.581px'>requested</i><i style='left:670.65px;letter-spacing:0.482px'>bytes</i></div>
</div>
<div class='abs' style='left:0;top:302px;width:1048px;height:28px;'>
<div class='abs' style='left:15.8px;top:0.9px;height:28px;line-height:28px;font-family:"Liberation Mono", monospace;font-size:13.2px;letter-spacing:1.054px;color:#151515;white-space:pre'>3.829910550</div>
<svg class='abs' style='left:136px;top:0' width='90' height='28' viewBox='150 0 90 28'><line x1='166.3' y1='3.2' x2='166.3' y2='22.8' stroke='#000' stroke-width='2'/><circle cx='188.6' cy='13.2' r='3.7' fill='none' stroke='#000' stroke-width='1.1'/><line x1='193.4' y1='13.2' x2='215.8' y2='13.2' stroke='#000' stroke-width='1.1'/><path d='M226 4.3 L232.3 10.2 L226 16.1 Z' fill='#000'/></svg>
<div class='l' style='left:227.87px;top:0.5px;height:28px;line-height:28px;color:#000'><i style='left:0.31px;letter-spacing:0.611px'>Setting</i><i style='left:66.98px;letter-spacing:0.843px'>configuration</i><i style='left:187.75px;letter-spacing:0.376px'>1</i><i style='left:203.98px;letter-spacing:1.010px'>for</i><i style='left:233.39px;letter-spacing:0.377px'>device</i><i style='left:293.87px;letter-spacing:0.376px'>6</i></div>
</div>
<div class='abs' style='left:0;top:330px;width:1048px;height:28px;'>
<div class='abs' style='left:15.8px;top:0.9px;height:28px;line-height:28px;font-family:"Liberation Mono", monospace;font-size:13.2px;letter-spacing:1.054px;color:#151515;white-space:pre'>3.830462766</div>
<svg class='abs' style='left:136px;top:0' width='90' height='28' viewBox='150 0 90 28'><line x1='166.3' y1='3.2' x2='166.3' y2='22.8' stroke='#000' stroke-width='2'/><circle cx='188.6' cy='13.2' r='3.7' fill='none' stroke='#000' stroke-width='1.1'/><line x1='193.4' y1='13.2' x2='215.8' y2='13.2' stroke='#000' stroke-width='1.1'/><path d='M226 4.3 L232.3 10.2 L226 16.1 Z' fill='#000'/></svg>
<div class='l' style='left:227.78px;top:0.5px;height:28px;line-height:28px;color:#000'><i style='left:0.38px;letter-spacing:0.760px'>Getting</i><i style='left:70.00px;letter-spacing:0.727px'>string</i><i style='left:124.41px;letter-spacing:0.677px'>descriptor</i><i style='left:216.65px;letter-spacing:0.315px'>#3,</i><i style='left:248.52px;letter-spacing:0.606px'>language</i><i style='left:333.82px;letter-spacing:0.311px'>0x0409</i><i style='left:400.96px;letter-spacing:0.170px'>(English/US)</i><i style='left:511.40px;letter-spacing:1.014px'>for</i><i style='left:540.83px;letter-spacing:0.382px'>device</i><i style='left:601.04px;letter-spacing:-0.226px'>6,</i><i style='left:621.66px;letter-spacing:0.693px'>reading</i><i style='left:692.72px;letter-spacing:0.382px'>66</i><i style='left:719.58px;letter-spacing:1.165px'>of</i><i style='left:742.13px;letter-spacing:0.382px'>259</i><i style='left:778.92px;letter-spacing:-0.098px'>re…</i></div>
</div>
<div class='abs' style='left:0;top:358px;width:1048px;height:28px;'>
<div class='abs' style='left:15.8px;top:0.9px;height:28px;line-height:28px;font-family:"Liberation Mono", monospace;font-size:13.2px;letter-spacing:1.054px;color:#151515;white-space:pre'>3.830937866</div>
<svg class='abs' style='left:136px;top:0' width='90' height='28' viewBox='150 0 90 28'><line x1='166.3' y1='3.2' x2='166.3' y2='22.8' stroke='#000' stroke-width='2'/><circle cx='188.6' cy='13.2' r='3.7' fill='none' stroke='#000' stroke-width='1.1'/><line x1='193.4' y1='13.2' x2='215.8' y2='13.2' stroke='#000' stroke-width='1.1'/><path d='M226 4.3 L232.3 10.2 L226 16.1 Z' fill='#000'/></svg>
<div class='l' style='left:227.77px;top:0.5px;height:28px;line-height:28px;color:#000'><i style='left:-0.24px;letter-spacing:-0.475px'>Class</i><i style='left:48.96px;letter-spacing:0.527px'>request</i><i style='left:118.87px;letter-spacing:0.295px'>#0,</i><i style='left:150.66px;letter-spacing:0.566px'>index</i><i style='left:202.16px;letter-spacing:-0.242px'>0,</i><i style='left:222.55px;letter-spacing:0.316px'>value</i><i style='left:273.22px;letter-spacing:0.359px'>0</i><i style='left:289.42px;letter-spacing:0.996px'>for</i><i style='left:318.86px;letter-spacing:0.509px'>interface</i><i style='left:398.55px;letter-spacing:-0.242px'>6.0,</i><i style='left:433.89px;letter-spacing:0.672px'>reading</i><i style='left:504.78px;letter-spacing:0.359px'>49</i><i style='left:531.59px;letter-spacing:1.146px'>of</i><i style='left:554.09px;letter-spacing:0.363px'>1009</i><i style='left:601.66px;letter-spacing:0.562px'>requested</i><i style='left:693.34px;letter-spacing:0.464px'>bytes</i></div>
</div>
<div class='abs' style='left:0;top:386px;width:1048px;height:28px;'>
<div class='abs' style='left:15.8px;top:0.9px;height:28px;line-height:28px;font-family:"Liberation Mono", monospace;font-size:13.2px;letter-spacing:1.054px;color:#151515;white-space:pre'>3.832555016</div>
<svg class='abs' style='left:136px;top:0' width='90' height='28' viewBox='150 0 90 28'><line x1='166.3' y1='3.2' x2='166.3' y2='22.8' stroke='#000' stroke-width='2'/><circle cx='188.6' cy='13.2' r='3.7' fill='none' stroke='#000' stroke-width='1.1'/><line x1='193.4' y1='13.2' x2='215.8' y2='13.2' stroke='#000' stroke-width='1.1'/><path d='M226 4.3 L232.3 10.2 L226 16.1 Z' fill='#000'/></svg>
<div class='l' style='left:227.77px;top:0.5px;height:28px;line-height:28px;color:#000'><i style='left:-0.24px;letter-spacing:-0.475px'>Class</i><i style='left:48.96px;letter-spacing:0.527px'>request</i><i style='left:118.87px;letter-spacing:0.295px'>#0,</i><i style='left:150.66px;letter-spacing:0.566px'>index</i><i style='left:202.16px;letter-spacing:-0.242px'>0,</i><i style='left:222.55px;letter-spacing:0.316px'>value</i><i style='left:273.22px;letter-spacing:0.359px'>0</i><i style='left:289.42px;letter-spacing:0.996px'>for</i><i style='left:318.86px;letter-spacing:0.509px'>interface</i><i style='left:398.55px;letter-spacing:-0.242px'>6.0,</i><i style='left:433.89px;letter-spacing:0.672px'>reading</i><i style='left:504.78px;letter-spacing:0.359px'>49</i><i style='left:531.59px;letter-spacing:1.146px'>of</i><i style='left:554.09px;letter-spacing:0.363px'>1024</i><i style='left:601.66px;letter-spacing:0.562px'>requested</i><i style='left:693.34px;letter-spacing:0.464px'>bytes</i></div>
</div>
<div class='abs' style='left:0;top:414px;width:1048px;height:28px;'>
<div class='abs' style='left:15.8px;top:0.9px;height:28px;line-height:28px;font-family:"Liberation Mono", monospace;font-size:13.2px;letter-spacing:1.054px;color:#151515;white-space:pre'>3.833602950</div>
<svg class='abs' style='left:136px;top:0' width='90' height='28' viewBox='150 0 90 28'><line x1='166.3' y1='3.2' x2='166.3' y2='22.8' stroke='#000' stroke-width='2'/><circle cx='188.6' cy='13.2' r='3.7' fill='none' stroke='#000' stroke-width='1.1'/><line x1='193.4' y1='13.2' x2='215.8' y2='13.2' stroke='#000' stroke-width='1.1'/><path d='M226 4.3 L232.3 10.2 L226 16.1 Z' fill='#000'/></svg>
<div class='l' style='left:227.77px;top:0.5px;height:28px;line-height:28px;color:#000'><i style='left:-0.24px;letter-spacing:-0.475px'>Class</i><i style='left:48.96px;letter-spacing:0.527px'>request</i><i style='left:118.87px;letter-spacing:0.295px'>#0,</i><i style='left:150.66px;letter-spacing:0.566px'>index</i><i style='left:202.16px;letter-spacing:-0.242px'>0,</i><i style='left:222.55px;letter-spacing:0.316px'>value</i><i style='left:273.22px;letter-spacing:0.359px'>0</i><i style='left:289.42px;letter-spacing:0.996px'>for</i><i style='left:318.86px;letter-spacing:0.509px'>interface</i><i style='left:398.55px;letter-spacing:-0.242px'>6.0,</i><i style='left:433.89px;letter-spacing:0.672px'>reading</i><i style='left:504.78px;letter-spacing:0.359px'>49</i><i style='left:531.59px;letter-spacing:1.146px'>of</i><i style='left:554.09px;letter-spacing:0.363px'>1024</i><i style='left:601.66px;letter-spacing:0.562px'>requested</i><i style='left:693.34px;letter-spacing:0.464px'>bytes</i></div>
</div>
<div class='abs' style='left:0;top:442px;width:1048px;height:28px;'>
<div class='abs' style='left:15.8px;top:0.9px;height:28px;line-height:28px;font-family:"Liberation Mono", monospace;font-size:13.2px;letter-spacing:1.054px;color:#151515;white-space:pre'>3.834329033</div>
<svg class='abs' style='left:136px;top:0' width='90' height='28' viewBox='150 0 90 28'><line x1='166.3' y1='3.2' x2='166.3' y2='22.8' stroke='#000' stroke-width='2'/><circle cx='188.6' cy='13.2' r='3.7' fill='none' stroke='#000' stroke-width='1.1'/><line x1='193.4' y1='13.2' x2='215.8' y2='13.2' stroke='#000' stroke-width='1.1'/><path d='M226 4.3 L232.3 10.2 L226 16.1 Z' fill='#000'/></svg>
<div class='l' style='left:227.78px;top:0.5px;height:28px;line-height:28px;color:#000'><i style='left:0.38px;letter-spacing:0.758px'>Getting</i><i style='left:69.98px;letter-spacing:0.725px'>string</i><i style='left:124.39px;letter-spacing:0.675px'>descriptor</i><i style='left:216.89px;letter-spacing:0.887px'>#0</i><i style='left:244.43px;letter-spacing:1.013px'>for</i><i style='left:273.86px;letter-spacing:0.380px'>device</i><i style='left:334.06px;letter-spacing:-0.227px'>6,</i><i style='left:354.67px;letter-spacing:0.691px'>reading</i><i style='left:425.72px;letter-spacing:0.380px'>4</i><i style='left:442.02px;letter-spacing:1.163px'>of</i><i style='left:464.57px;letter-spacing:0.380px'>255</i><i style='left:501.69px;letter-spacing:0.582px'>requested</i><i style='left:593.55px;letter-spacing:0.483px'>bytes</i></div>
</div>
<div class='abs' style='left:0;top:470px;width:1048px;height:28px;'>
<div class='abs' style='left:15.8px;top:0.9px;height:28px;line-height:28px;font-family:"Liberation Mono", monospace;font-size:13.2px;letter-spacing:1.054px;color:#151515;white-space:pre'>3.834608550</div>
<svg class='abs' style='left:136px;top:0' width='90' height='28' viewBox='150 0 90 28'><line x1='166.3' y1='3.2' x2='166.3' y2='22.8' stroke='#000' stroke-width='2'/><circle cx='188.6' cy='13.2' r='3.7' fill='none' stroke='#000' stroke-width='1.1'/><line x1='193.4' y1='13.2' x2='215.8' y2='13.2' stroke='#000' stroke-width='1.1'/><path d='M226 4.3 L232.3 10.2 L226 16.1 Z' fill='#000'/></svg>
<div class='l' style='left:227.77px;top:0.5px;height:28px;line-height:28px;color:#000'><i style='left:-0.24px;letter-spacing:-0.475px'>Class</i><i style='left:48.96px;letter-spacing:0.527px'>request</i><i style='left:118.87px;letter-spacing:0.295px'>#0,</i><i style='left:150.66px;letter-spacing:0.566px'>index</i><i style='left:202.16px;letter-spacing:-0.242px'>0,</i><i style='left:222.55px;letter-spacing:0.316px'>value</i><i style='left:273.22px;letter-spacing:0.359px'>0</i><i style='left:289.42px;letter-spacing:0.996px'>for</i><i style='left:318.86px;letter-spacing:0.509px'>interface</i><i style='left:398.55px;letter-spacing:-0.242px'>6.0,</i><i style='left:433.89px;letter-spacing:0.672px'>reading</i><i style='left:504.78px;letter-spacing:0.359px'>49</i><i style='left:531.59px;letter-spacing:1.146px'>of</i><i style='left:554.09px;letter-spacing:0.363px'>1024</i><i style='left:601.66px;letter-spacing:0.562px'>requested</i><i style='left:693.34px;letter-spacing:0.464px'>bytes</i></div>
</div>
</div>
<!-- devices -->
<div style='position:absolute;left:1072.8px;top:98.2px;height:25px;line-height:25px;font-family:"Liberation Sans", sans-serif;font-size:18.6px;font-weight:bold;letter-spacing:-0.635px;color:#999b9b;white-space:pre;'>Devices</div>
<div class='abs' style='left:1066px;top:123px;width:392.9px;height:497px;overflow:hidden'>
<div class='abs' style='left:0;top:0px;width:393px;height:28px;background:#3584e4;'>
<svg class='abs' style='left:13px;top:7px' width='15' height='9' viewBox='0 0 15 9'><path d='M0.30 0.00 L12.30 0.00 L6.30 6.20 Z' fill='#fff'/></svg>
<div class='l' style='left:32.60px;top:0.5px;height:28px;line-height:28px;color:#fff'><i style='left:0.08px;letter-spacing:0.157px'>Device</i><i style='left:61.99px;letter-spacing:-0.295px'>6:</i><i style='left:82.42px;letter-spacing:0.615px'>N41\u{0}\u{0}\u{0}\u{0}\u{0}\…</i></div>
</div>
<div class='abs' style='left:0;top:28px;width:393px;height:28px;'>
<svg class='abs' style='left:46px;top:7px' width='15' height='9' viewBox='0 0 15 9'><path d='M0.20 0.00 L12.20 0.00 L6.20 6.20 Z' fill='#000'/></svg>
<div class='l' style='left:65.40px;top:0.5px;height:28px;line-height:28px;color:#000'><i style='left:0.10px;letter-spacing:0.208px'>Device</i><i style='left:62.80px;letter-spacing:0.642px'>descriptor</i></div>
</div>
<div class='abs' style='left:0;top:56px;width:393px;height:28px;'>
<div class='l' style='left:77.10px;top:0.5px;height:28px;line-height:28px;color:#000'><i style='left:0.20px;letter-spacing:0.392px'>Length:</i><i style='left:69.26px;letter-spacing:0.340px'>18</i><i style='left:95.68px;letter-spacing:0.448px'>bytes</i></div>
</div>
<div class='abs' style='left:0;top:84px;width:393px;height:28px;'>
<div class='l' style='left:77.10px;top:0.5px;height:28px;line-height:28px;color:#000'><i style='left:-0.09px;letter-spacing:-0.186px'>Type:</i><i style='left:49.25px;letter-spacing:0.231px'>0x01</i></div>
</div>
<div class='abs' style='left:0;top:112px;width:393px;height:28px;'>
<div class='l' style='left:77.10px;top:0.5px;height:28px;line-height:28px;color:#000'><i style='left:-0.44px;letter-spacing:-0.890px'>USB</i><i style='left:40.37px;letter-spacing:0.206px'>Version:</i><i style='left:113.34px;letter-spacing:0.042px'>2.00</i></div>
</div>
<div class='abs' style='left:0;top:140px;width:393px;height:28px;'>
<div class='l' style='left:77.10px;top:0.5px;height:28px;line-height:28px;color:#000'><i style='left:-0.29px;letter-spacing:-0.590px'>Class:</i><i style='left:52.56px;letter-spacing:-0.030px'>0x00:</i><i style='left:102.71px;letter-spacing:0.476px'>(Defined</i><i style='left:181.00px;letter-spacing:0.599px'>at</i><i style='left:202.66px;letter-spacing:0.392px'>Interface</i><i style='left:282.30px;letter-spacing:-0.295px'>l…</i></div>
</div>
<div class='abs' style='left:0;top:168px;width:393px;height:28px;'>
<div class='l' style='left:77.10px;top:0.5px;height:28px;line-height:28px;color:#000'><i style='left:-0.11px;letter-spacing:-0.221px'>Subclass:</i><i style='left:82.73px;letter-spacing:0.231px'>0x00</i></div>
</div>
<div class='abs' style='left:0;top:196px;width:393px;height:28px;'>
<div class='l' style='left:77.10px;top:0.5px;height:28px;line-height:28px;color:#000'><i style='left:0.25px;letter-spacing:0.496px'>Protocol:</i><i style='left:82.08px;letter-spacing:0.231px'>0x00</i></div>
</div>
<div class='abs' style='left:0;top:224px;width:393px;height:28px;'>
<div class='l' style='left:77.10px;top:0.5px;height:28px;line-height:28px;color:#000'><i style='left:0.32px;letter-spacing:0.643px'>Max</i><i style='left:41.29px;letter-spacing:-1.044px'>EP0</i><i style='left:78.84px;letter-spacing:0.502px'>packet</i><i style='left:140.68px;letter-spacing:-0.269px'>size:</i><i style='left:182.58px;letter-spacing:0.340px'>8</i><i style='left:198.48px;letter-spacing:0.447px'>bytes</i></div>
</div>
<div class='abs' style='left:0;top:252px;width:393px;height:28px;'>
<div class='l' style='left:77.10px;top:0.5px;height:28px;line-height:28px;color:#000'><i style='left:0.33px;letter-spacing:0.666px'>Vendor</i><i style='left:67.24px;letter-spacing:-0.095px'>ID:</i><i style='left:95.69px;letter-spacing:-0.049px'>0x2AAF</i></div>
</div>
<div class='abs' style='left:0;top:280px;width:393px;height:28px;'>
<div class='l' style='left:77.10px;top:0.5px;height:28px;line-height:28px;color:#000'><i style='left:0.31px;letter-spacing:0.620px'>Product</i><i style='left:72.65px;letter-spacing:-0.095px'>ID:</i><i style='left:101.26px;letter-spacing:0.270px'>0x9006</i></div>
</div>
<div class='abs' style='left:0;top:308px;width:393px;height:28px;'>
<div class='l' style='left:77.10px;top:0.5px;height:28px;line-height:28px;color:#000'><i style='left:0.10px;letter-spacing:0.206px'>Version:</i><i style='left:73.07px;letter-spacing:0.042px'>1.00</i></div>
</div>
<div class='abs' style='left:0;top:336px;width:393px;height:28px;'>
<div class='l' style='left:77.10px;top:0.5px;height:28px;line-height:28px;color:#000'><i style='left:0.32px;letter-spacing:0.638px'>Manufacturer</i><i style='left:120.91px;letter-spacing:0.437px'>string:</i><i style='left:179.26px;letter-spacing:0.791px'>#1</i><i style='left:206.14px;letter-spacing:0.066px'>&#x27;HPRT\u{0…</i></div>
</div>
<div class='abs' style='left:0;top:364px;width:393px;height:28px;'>
<div class='l' style='left:77.10px;top:0.5px;height:28px;line-height:28px;color:#000'><i style='left:0.29px;letter-spacing:0.587px'>Product</i><i style='left:72.67px;letter-spacing:0.447px'>string:</i><i style='left:131.10px;letter-spacing:0.807px'>#2</i><i style='left:158.32px;letter-spacing:0.686px'>&#x27;N41\u{0}\u{0}\…</i></div>
</div>
<div class='abs' style='left:0;top:392px;width:393px;height:28px;'>
<div class='l' style='left:77.10px;top:0.5px;height:28px;line-height:28px;color:#000'><i style='left:0.05px;letter-spacing:0.090px'>Serial</i><i style='left:52.99px;letter-spacing:0.571px'>string:</i><i style='left:112.40px;letter-spacing:0.986px'>#3</i><i style='left:139.89px;letter-spacing:0.528px'>&#x27;N410002422026…</i></div>
</div>
<div class='abs' style='left:0;top:420px;width:393px;height:28px;'>
<svg class='abs' style='left:46px;top:7px' width='15' height='9' viewBox='0 0 15 9'><path d='M0.40 0.00 L12.40 0.00 L6.40 6.20 Z' fill='#000'/></svg>
<div class='l' style='left:65.40px;top:0.5px;height:28px;line-height:28px;color:#000'><i style='left:0.37px;letter-spacing:0.736px'>Configuration</i><i style='left:123.83px;letter-spacing:0.340px'>1</i></div>
</div>
<div class='abs' style='left:0;top:448px;width:393px;height:28px;'>
<svg class='abs' style='left:82px;top:4px' width='9' height='14' viewBox='0 0 9 14'><path d='M0.10 0.90 L6.30 6.60 L0.10 12.30 Z' fill='#000'/></svg>
<div class='l' style='left:98.20px;top:0.5px;height:28px;line-height:28px;color:#000'><i style='left:0.37px;letter-spacing:0.736px'>Configuration</i><i style='left:123.98px;letter-spacing:0.642px'>descriptor</i></div>
</div>
<div class='abs' style='left:0;top:476px;width:393px;height:28px;'>
<svg class='abs' style='left:82px;top:4px' width='9' height='14' viewBox='0 0 9 14'><path d='M0.10 0.90 L6.30 6.60 L0.10 12.30 Z' fill='#000'/></svg>
<div class='l' style='left:98.20px;top:0.5px;height:28px;line-height:28px;color:#000'><i style='left:0.22px;letter-spacing:0.433px'>Interface</i><i style='left:80.55px;letter-spacing:0.340px'>0</i></div>
</div>
</div>
<!-- detail -->
<div class='abs' style='left:14.1px;top:620.0px;width:1444.8px;height:1.0px;background:#c9c7c5;'></div>
<div class='abs' style='left:14.1px;top:621.0px;width:1444.8px;height:3.3px;background:#f4f3f2;'></div>
<div class='abs' style='left:14.1px;top:624.2px;width:1444.8px;height:1.0px;background:#cfcdcb;'></div>
<div class='l' style='left:19.00px;top:625.9px;height:24px;line-height:24px;color:#000'><i style='left:0.13px;letter-spacing:0.255px'>Transaction</i><i style='left:103.51px;letter-spacing:1.062px'>group</i><i style='left:160.88px;letter-spacing:0.970px'>with</i><i style='left:202.28px;letter-spacing:0.325px'>5</i><i style='left:218.16px;letter-spacing:0.406px'>transactions</i></div>
<div class='l' style='left:19.00px;top:649.95px;height:24px;line-height:24px;color:#000'><i style='left:0.24px;letter-spacing:0.470px'>Timestamp:</i><i style='left:104.92px;letter-spacing:0.093px'>3,646,188,666</i><i style='left:228.37px;letter-spacing:0.025px'>ns</i><i style='left:253.66px;letter-spacing:1.161px'>from</i><i style='left:299.91px;letter-spacing:0.547px'>start</i><i style='left:343.87px;letter-spacing:1.154px'>of</i><i style='left:366.51px;letter-spacing:0.601px'>capture</i></div>
<div class='l' style='left:19.00px;top:674.0px;height:24px;line-height:24px;color:#000'><i style='left:0.05px;letter-spacing:0.098px'>First</i><i style='left:41.68px;letter-spacing:0.569px'>transaction</i><i style='left:142.61px;letter-spacing:0.314px'>#4,</i><i style='left:174.49px;letter-spacing:0.632px'>first</i><i style='left:212.42px;letter-spacing:0.540px'>packet</i><i style='left:274.99px;letter-spacing:0.719px'>#36</i></div>
<div class='l' style='left:19.00px;top:698.05px;height:24px;line-height:24px;color:#000'><i style='left:0.35px;letter-spacing:0.690px'>Control</i><i style='left:69.30px;letter-spacing:0.431px'>transfer</i><i style='left:140.34px;letter-spacing:1.003px'>on</i><i style='left:167.66px;letter-spacing:0.307px'>device</i><i style='left:227.68px;letter-spacing:0.297px'>0</i></div>
<div class='l' style='left:19.00px;top:722.1px;height:24px;line-height:24px;color:#000'><i style='left:0.37px;letter-spacing:0.736px'>Getting</i><i style='left:69.63px;letter-spacing:0.358px'>device</i><i style='left:130.13px;letter-spacing:0.654px'>descriptor</i><i style='left:222.41px;letter-spacing:0.860px'>#0</i><i style='left:249.89px;letter-spacing:0.993px'>for</i><i style='left:279.24px;letter-spacing:0.358px'>device</i><i style='left:339.29px;letter-spacing:-0.245px'>0,</i><i style='left:359.86px;letter-spacing:0.668px'>reading</i><i style='left:430.73px;letter-spacing:0.354px'>8</i><i style='left:447.00px;letter-spacing:1.142px'>of</i><i style='left:469.48px;letter-spacing:0.354px'>64</i><i style='left:495.99px;letter-spacing:0.558px'>requested</i><i style='left:587.63px;letter-spacing:0.460px'>bytes</i></div>
<div class='abs' style='left:14.1px;top:754.5px;width:1444.8px;height:1.0px;background:#cdc7c2;'></div>
<div class='abs' style='left:14.1px;top:755.5px;width:1444.8px;height:29.2px;background:#f6f5f4;'></div>
<div class='l' style='left:16.39px;top:755.6px;height:29px;line-height:29px;color:#242628'><i style='left:0.12px;letter-spacing:0.239px'>Unsaved</i><i style='left:79.40px;letter-spacing:0.421px'>capture:</i><i style='left:154.15px;letter-spacing:0.368px'>1</i><i style='left:169.90px;letter-spacing:0.067px'>devices,</i><i style='left:243.02px;letter-spacing:0.368px'>3</i><i style='left:259.05px;letter-spacing:0.631px'>endpoints,</i><i style='left:354.97px;letter-spacing:0.396px'>11,823</i><i style='left:417.24px;letter-spacing:0.343px'>transactions,</i><i style='left:530.63px;letter-spacing:0.198px'>186,147</i><i style='left:603.54px;letter-spacing:0.332px'>packets</i></div>
</div></body></html>
